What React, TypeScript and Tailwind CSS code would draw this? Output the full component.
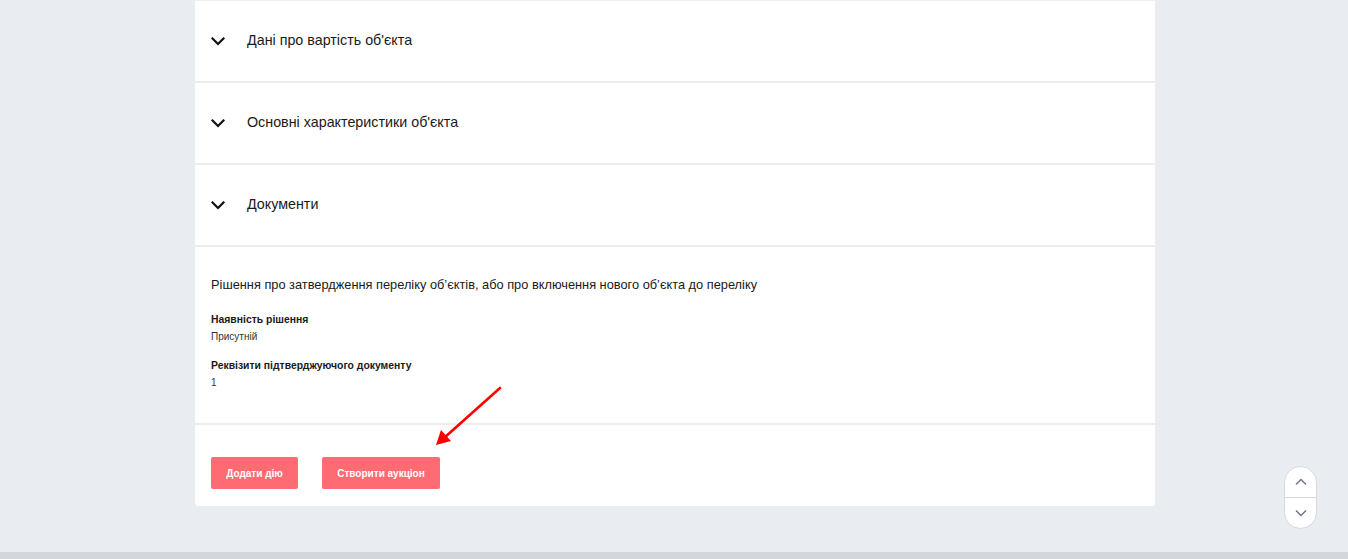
function Chevron() {
  return (
    <svg width="14" height="9" viewBox="0 0 14 9" fill="none" className="shrink-0">
      <path d="M1.5 1.5L7 7L12.5 1.5" stroke="#111" strokeWidth="2.2" strokeLinecap="square" />
    </svg>
  );
}

function AccordionRow({ title }: { title: string }) {
  return (
    <div className="flex h-[82px] items-center border-b-2 border-[#ececec] pl-[16px]">
      <Chevron />
      <span className="ml-[22px] text-[14.3px] text-[#1a1a1a]">{title}</span>
    </div>
  );
}

export default function App() {
  return (
    <div className="relative flex min-h-[559px] flex-col bg-[#e9edf2] font-['Liberation_Sans',Arial,sans-serif]">
      <div className="flex-1">
        <div className="ml-[195px] w-[960px] rounded-b-[3px] border-t border-[#efefef] bg-white">
          <AccordionRow title="Дані про вартість об'єкта" />
          <AccordionRow title="Основні характеристики об'єкта" />
          <AccordionRow title="Документи" />
          <div className="border-b-2 border-[#ececec] px-[16px] pt-[29px] pb-[33px]">
            <p className="text-[12.8px] leading-[18px] text-[#1a1a1a]">
              Рішення про затвердження переліку обʼєктів, або про включення нового обʼєкта до переліку
            </p>
            <div className="mt-[19px]">
              <div className="text-[10.4px] font-bold leading-[14px] text-[#1a1a1a]">Наявність рішення</div>
              <div className="mt-[3px] text-[10px] leading-[14px] text-[#333]">Присутній</div>
            </div>
            <div className="mt-[15px]">
              <div className="text-[10.4px] font-bold leading-[14px] text-[#1a1a1a]">Реквізити підтверджуючого документу</div>
              <div className="mt-[3px] text-[10px] leading-[14px] text-[#333]">1</div>
            </div>
          </div>
          <div className="flex gap-[24px] px-[16px] pt-[32px] pb-[17px]">
            <button className="h-[32px] w-[87px] rounded-[2px] bg-[#ff6b73] text-[10px] font-bold text-white">
              Додати дію
            </button>
            <button className="h-[32px] w-[118px] rounded-[2px] bg-[#ff6b73] text-[10px] font-bold text-white">
              Створити аукціон
            </button>
          </div>
        </div>
      </div>
      <div className="h-[7px] bg-[#d3d7db]" />

      <svg className="absolute left-[430px] top-[382px]" width="80" height="70" viewBox="0 0 80 70">
        <path d="M70 6L14 56" stroke="#ff0000" strokeWidth="2.6" strokeLinecap="round" />
        <path d="M6 63L11 48L21 59Z" fill="#ff0000" />
      </svg>

      <div className="absolute left-[1284px] top-[466px] flex w-[33px] flex-col overflow-hidden rounded-full border border-[#d5d9de] bg-white">
        <button className="flex h-[31px] items-center justify-center border-b border-[#d5d9de]">
          <svg width="12" height="8" viewBox="0 0 12 8" fill="none">
            <path d="M1 6.5L6 1.5L11 6.5" stroke="#6b7380" strokeWidth="1.4" />
          </svg>
        </button>
        <button className="flex h-[30px] items-center justify-center">
          <svg width="12" height="8" viewBox="0 0 12 8" fill="none">
            <path d="M1 1.5L6 6.5L11 1.5" stroke="#6b7380" strokeWidth="1.4" />
          </svg>
        </button>
      </div>
    </div>
  );
}
